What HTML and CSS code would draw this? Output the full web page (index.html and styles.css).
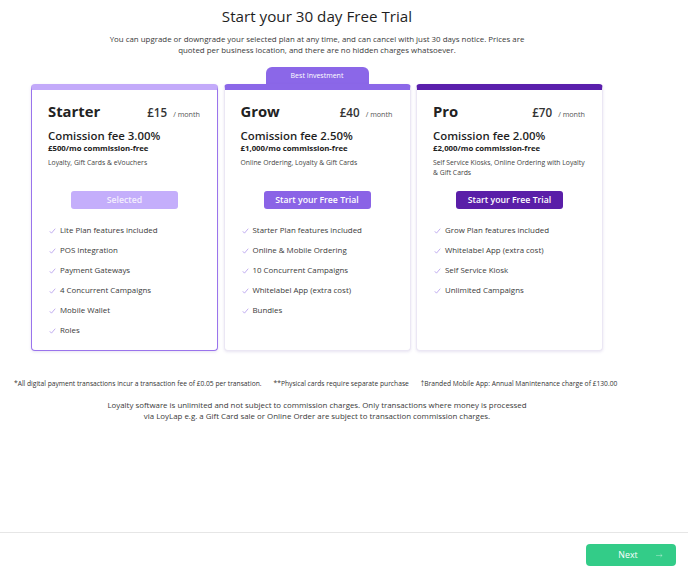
FILE: index.html
```html
<!DOCTYPE html>
<html lang="en">
<head>
<meta charset="utf-8">
<title>Start your 30 day Free Trial</title>
<link rel="stylesheet" href="styles.css">
</head>
<body>
<div class="page">
  <main class="main">
    <h1 class="title">Start your 30 day Free Trial</h1>
    <p class="subtitle">You can upgrade or downgrade your selected plan at any time, and can cancel with just 30 days notice. Prices are<br>quoted per business location, and there are no hidden charges whatsoever.</p>

    <div class="plans">
      <div class="plan-col">
        <div class="card card-starter selected">
          <div class="card-head">
            <span class="plan-name">Starter</span>
            <span class="price">£15 <span class="per">/ month</span></span>
          </div>
          <div class="fee">Comission fee 3.00%</div>
          <div class="free">£500/mo commission-free</div>
          <div class="desc">Loyalty, Gift Cards &amp; eVouchers</div>
          <button class="btn btn-starter">Selected</button>
          <ul class="features">
            <li><svg class="check" viewBox="0 0 8 7"><polyline points="0.8,3.8 2.8,6 7.2,0.8"/></svg>Lite Plan features included</li>
            <li><svg class="check" viewBox="0 0 8 7"><polyline points="0.8,3.8 2.8,6 7.2,0.8"/></svg>POS Integration</li>
            <li><svg class="check" viewBox="0 0 8 7"><polyline points="0.8,3.8 2.8,6 7.2,0.8"/></svg>Payment Gateways</li>
            <li><svg class="check" viewBox="0 0 8 7"><polyline points="0.8,3.8 2.8,6 7.2,0.8"/></svg>4 Concurrent Campaigns</li>
            <li><svg class="check" viewBox="0 0 8 7"><polyline points="0.8,3.8 2.8,6 7.2,0.8"/></svg>Mobile Wallet</li>
            <li><svg class="check" viewBox="0 0 8 7"><polyline points="0.8,3.8 2.8,6 7.2,0.8"/></svg>Roles</li>
          </ul>
        </div>
      </div>

      <div class="plan-col">
        <div class="tab">Best Investment</div>
        <div class="card card-grow">
          <div class="card-head">
            <span class="plan-name">Grow</span>
            <span class="price">£40 <span class="per">/ month</span></span>
          </div>
          <div class="fee">Comission fee 2.50%</div>
          <div class="free">£1,000/mo commission-free</div>
          <div class="desc">Online Ordering, Loyalty &amp; Gift Cards</div>
          <button class="btn btn-grow">Start your Free Trial</button>
          <ul class="features">
            <li><svg class="check" viewBox="0 0 8 7"><polyline points="0.8,3.8 2.8,6 7.2,0.8"/></svg>Starter Plan features included</li>
            <li><svg class="check" viewBox="0 0 8 7"><polyline points="0.8,3.8 2.8,6 7.2,0.8"/></svg>Online &amp; Mobile Ordering</li>
            <li><svg class="check" viewBox="0 0 8 7"><polyline points="0.8,3.8 2.8,6 7.2,0.8"/></svg>10 Concurrent Campaigns</li>
            <li><svg class="check" viewBox="0 0 8 7"><polyline points="0.8,3.8 2.8,6 7.2,0.8"/></svg>Whitelabel App (extra cost)</li>
            <li><svg class="check" viewBox="0 0 8 7"><polyline points="0.8,3.8 2.8,6 7.2,0.8"/></svg>Bundles</li>
          </ul>
        </div>
      </div>

      <div class="plan-col">
        <div class="card card-pro">
          <div class="card-head">
            <span class="plan-name">Pro</span>
            <span class="price">£70 <span class="per">/ month</span></span>
          </div>
          <div class="fee">Comission fee 2.00%</div>
          <div class="free">£2,000/mo commission-free</div>
          <div class="desc">Self Service Kiosks, Online Ordering with Loyalty &amp; Gift Cards</div>
          <button class="btn btn-pro">Start your Free Trial</button>
          <ul class="features">
            <li><svg class="check" viewBox="0 0 8 7"><polyline points="0.8,3.8 2.8,6 7.2,0.8"/></svg>Grow Plan features included</li>
            <li><svg class="check" viewBox="0 0 8 7"><polyline points="0.8,3.8 2.8,6 7.2,0.8"/></svg>Whitelabel App (extra cost)</li>
            <li><svg class="check" viewBox="0 0 8 7"><polyline points="0.8,3.8 2.8,6 7.2,0.8"/></svg>Self Service Kiosk</li>
            <li><svg class="check" viewBox="0 0 8 7"><polyline points="0.8,3.8 2.8,6 7.2,0.8"/></svg>Unlimited Campaigns</li>
          </ul>
        </div>
      </div>
    </div>

    <div class="notes">
      <span>*All digital payment transactions incur a transaction fee of £0.05 per transation.</span>
      <span>**Physical cards require separate purchase</span>
      <span>†Branded Mobile App: Annual Manintenance charge of £130.00</span>
    </div>

    <p class="loyalty">Loyalty software is unlimited and not subject to commission charges. Only transactions where money is processed<br>via LoyLap e.g. a Gift Card sale or Online Order are subject to transaction commission charges.</p>
  </main>

  <footer class="footer">
    <button class="next">Next <svg class="arrow" viewBox="0 0 8 5"><path d="M0 2.5H7M5 0.8L7 2.5L5 4.2"/></svg></button>
  </footer>
</div>
</body>
</html>
```

FILE: styles.css
```css
* { box-sizing: border-box; }

html, body {
  margin: 0;
  padding: 0;
  background: #ffffff;
}

body {
  font-family: "Open Sans", "Liberation Sans", sans-serif;
  color: #222;
}

.page {
  min-height: 570px;
  display: flex;
  flex-direction: column;
}

.main {
  width: 634px;
  padding-top: 5px;
}

.title {
  margin: 0;
  text-align: center;
  font-size: 15.2px;
  line-height: 22px;
  font-weight: 500;
  color: #1f1f1f;
}

.subtitle {
  margin: 7px 0 0;
  text-align: center;
  font-size: 7.9px;
  line-height: 11px;
  color: #3a3a3a;
}

.plans {
  margin-top: 11px;
  display: grid;
  grid-template-columns: 187px 187px 187px;
  column-gap: 5.5px;
  justify-content: center;
  align-items: stretch;
}

.plan-col {
  display: flex;
  flex-direction: column;
  padding-top: 17px;
}

.plan-col:nth-child(2) {
  padding-top: 0;
}

.tab {
  align-self: center;
  width: 103px;
  height: 17px;
  background: #8b67e8;
  color: #fff;
  border-radius: 6px 6px 0 0;
  font-size: 7px;
  line-height: 17px;
  text-align: center;
}

.card {
  flex: 1;
  background: #fff;
  border-radius: 4px;
  border: 1px solid #ebe7f4;
  border-top: 6px solid #8b67e8;
  box-shadow: 0 1px 3px rgba(120, 100, 180, 0.18);
  padding: 10px 16px 10px 16px;
  display: flex;
  flex-direction: column;
}

.card-starter {
  border-color: #9a74ec;
  border-top-color: #c3aafa;
}

.card-grow { border-top-color: #8b67e8; }

.card-pro { border-top-color: #5a1fac; }

.card-head {
  display: flex;
  align-items: baseline;
  justify-content: space-between;
  height: 22px;
}

.plan-name {
  font-size: 14.8px;
  line-height: 22px;
  font-weight: 700;
  color: #222;
}

.price {
  font-size: 11.6px;
  font-weight: 600;
  color: #333;
  padding-right: 1px;
}

.per {
  font-size: 7.2px;
  font-weight: 400;
  color: #555;
  margin-left: 3px;
}

.fee {
  margin-top: 7px;
  font-size: 11.4px;
  line-height: 14px;
  font-weight: 600;
  color: #1f1f1f;
}

.free {
  font-size: 7.8px;
  line-height: 10px;
  font-weight: 700;
  color: #222;
}

.desc {
  margin-top: 5px;
  min-height: 20px;
  font-size: 6.8px;
  line-height: 10px;
  color: #444;
}

.btn {
  align-self: center;
  margin-top: 13px;
  width: 107px;
  height: 18px;
  border: 0;
  border-radius: 3px;
  font-family: inherit;
  font-size: 8.7px;
  font-weight: 600;
  color: #fff;
  padding: 0;
  cursor: pointer;
}

.btn-starter { background: #c4aefb; color: #f4effe; }
.btn-grow { background: #8a63e6; }
.btn-pro { background: #5a1ea8; }

.features {
  list-style: none;
  margin: 11px 0 0;
  padding: 0;
}

.features li {
  display: flex;
  align-items: center;
  height: 20px;
  font-size: 7.9px;
  color: #3a3a3a;
}

.check {
  width: 7px;
  height: 6px;
  margin-left: 1px;
  margin-right: 4px;
  margin-top: 2px;
  fill: none;
  stroke: #b8a2ee;
  stroke-width: 1;
}

.notes {
  margin-top: 28px;
  padding-left: 14px;
  display: flex;
  gap: 12px;
  font-size: 6.7px;
  line-height: 10px;
  color: #333;
  white-space: nowrap;
}

.loyalty {
  margin: 11px 0 0;
  text-align: center;
  font-size: 7.9px;
  line-height: 11px;
  color: #3a3a3a;
}

.footer {
  margin-top: auto;
  height: 38px;
  border-top: 1px solid #e6e6e6;
  display: flex;
  justify-content: flex-end;
  align-items: flex-start;
  padding: 11px 12px 0 0;
}

.next {
  width: 90px;
  height: 22px;
  border: 0;
  border-radius: 4px;
  background: #33cc88;
  color: #fff;
  font-family: inherit;
  font-size: 8.8px;
  position: relative;
  padding: 0 6px 0 0;
}

.arrow {
  position: absolute;
  right: 13px;
  top: 9px;
  width: 7px;
  height: 5px;
  fill: none;
  stroke: rgba(255, 255, 255, 0.45);
  stroke-width: 0.8;
}
```
